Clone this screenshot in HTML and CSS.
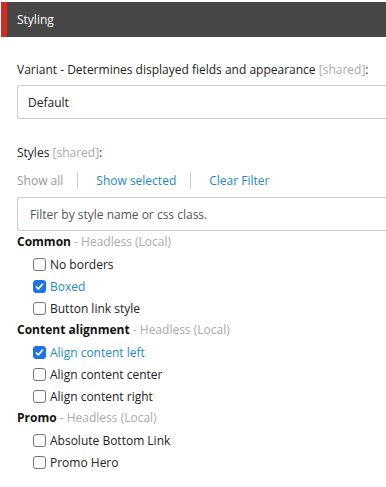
FILE: index.html
```html
<!DOCTYPE html>
<html lang="en">
<head>
    <meta charset="UTF-8">
    <title>Styling</title>
    <link rel="stylesheet" href="styles.css">
</head>
<body>
    <div class="section-header">
        <h2>Styling</h2>
    </div>

    <div class="section-body">
        <div class="field">
            <label class="field-label">Variant - Determines displayed fields and appearance <span class="shared">[shared]</span>:</label>
            <div class="select-box">Default</div>
        </div>

        <div class="field styles-field">
            <label class="field-label">Styles <span class="shared">[shared]</span>:</label>
            <div class="filter-links">
                <span class="filter-link inactive">Show all</span>
                <span class="filter-link">Show selected</span>
                <span class="filter-link">Clear Filter</span>
            </div>
            <div class="filter-input">Filter by style name or css class.</div>

            <div class="group">
                <div class="group-title"><b>Common</b> - Headless (Local)</div>
                <label class="option"><span class="box"></span>No borders</label>
                <label class="option checked"><span class="box"></span>Boxed</label>
                <label class="option"><span class="box"></span>Button link style</label>
            </div>

            <div class="group">
                <div class="group-title"><b>Content alignment</b> - Headless (Local)</div>
                <label class="option checked"><span class="box"></span>Align content left</label>
                <label class="option"><span class="box"></span>Align content center</label>
                <label class="option"><span class="box"></span>Align content right</label>
            </div>

            <div class="group">
                <div class="group-title"><b>Promo</b> - Headless (Local)</div>
                <label class="option"><span class="box"></span>Absolute Bottom Link</label>
                <label class="option"><span class="box"></span>Promo Hero</label>
            </div>
        </div>
    </div>
</body>
</html>
```

FILE: styles.css
```css
body {
    font-family: 'Open Sans', sans-serif;
    font-size: 12px;
    margin: 0;
    padding: 2px 0 0 1px;
    background-color: white;
    color: #222;
    overflow: hidden;
}
.section-header {
    background-color: #474747;
    border-left: 6px solid #d42b1e;
    height: 35px;
    display: flex;
    align-items: center;
}
.section-header h2 {
    margin: 0 0 0 10px;
    font-size: 12px;
    font-weight: normal;
    color: white;
}
.section-body {
    padding: 24px 0 0 16px;
}
.field-label {
    display: block;
    line-height: 18px;
}
.shared {
    color: #aaa;
}
.select-box {
    margin-top: 6px;
    height: 34px;
    box-sizing: border-box;
    border: 1px solid #ccc;
    border-right: none;
    border-radius: 3px 0 0 3px;
    padding: 0 10px;
    display: flex;
    align-items: center;
}
.styles-field {
    margin-top: 25px;
}
.filter-links {
    display: flex;
    margin-top: 9px;
    height: 18px;
    align-items: center;
}
.filter-link {
    color: #1d8ac2;
    padding: 0 14px 0 18px;
    border-left: 1px solid #ccc;
}
.filter-link:first-child {
    padding-left: 0;
    border-left: none;
}
.filter-link.inactive {
    color: #999;
}
.filter-input {
    margin-top: 8px;
    height: 34px;
    box-sizing: border-box;
    border: 1px solid #ccc;
    border-right: none;
    border-radius: 3px 0 0 3px;
    padding: 0 12px;
    display: flex;
    align-items: center;
    color: #555;
}
.group-title {
    line-height: 22px;
    color: #aaa;
}
.group-title b {
    color: #111;
}
.option {
    display: flex;
    align-items: center;
    height: 22px;
    padding-left: 16px;
}
.box {
    width: 11px;
    height: 11px;
    border: 1px solid #777;
    border-radius: 3px;
    margin-right: 4px;
    box-sizing: content-box;
}
.option.checked {
    color: #1d8ac2;
}
.option.checked .box {
    background-color: #1a73e8;
    border-color: #1a73e8;
    background-image: url("data:image/svg+xml,%3Csvg xmlns='http://www.w3.org/2000/svg' viewBox='0 0 11 11'%3E%3Cpath d='M2 5.5l2.3 2.5L9 2.5' fill='none' stroke='white' stroke-width='1.8'/%3E%3C/svg%3E");
}
```
